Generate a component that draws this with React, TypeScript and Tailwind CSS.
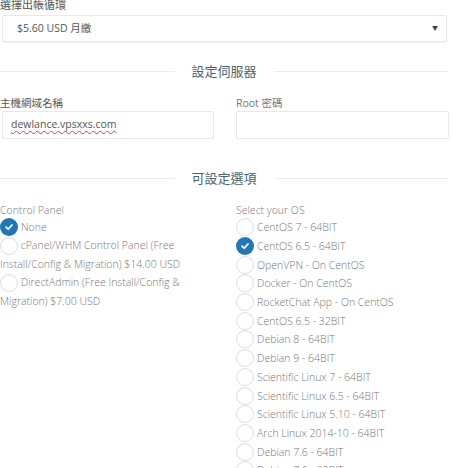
import React from "react";

const font = { fontFamily: '"Open Sans", "Noto Sans CJK TC", sans-serif' };

function Radio({ checked }: { checked?: boolean }) {
  if (checked) {
    return (
      <span className="inline-flex w-[18px] h-[18px] rounded-full bg-[#1f77b8] items-center justify-center align-middle shrink-0">
        <svg width="10" height="10" viewBox="0 0 10 10">
          <path d="M2 5.2 L4.2 7.2 L8 3" fill="none" stroke="white" strokeWidth="1.8" strokeLinecap="round" strokeLinejoin="round" />
        </svg>
      </span>
    );
  }
  return <span className="inline-block w-[18px] h-[18px] rounded-full border border-[#e0e0e0] bg-white shadow-[inset_0_1px_1px_rgba(0,0,0,0.04)] align-middle shrink-0" />;
}

function Heading({ text }: { text: string }) {
  return (
    <div className="flex items-center">
      <div className="flex-1 h-px bg-[#ededed]" />
      <div className="px-[17px] text-[13px] text-[#46646f] leading-[16px]">{text}</div>
      <div className="flex-1 h-px bg-[#ededed] mr-[5px]" />
    </div>
  );
}

const osList = [
  "CentOS 7 - 64BIT",
  "CentOS 6.5 - 64BIT",
  "OpenVPN - On CentOS",
  "Docker - On CentOS",
  "RocketChat App - On CentOS",
  "CentOS 6.5 - 32BIT",
  "Debian 8 - 64BIT",
  "Debian 9 - 64BIT",
  "Scientific Linux 7 - 64BIT",
  "Scientific Linux 6.5 - 64BIT",
  "Scientific Linux 5.10 - 64BIT",
  "Arch Linux 2014-10 - 64BIT",
  "Debian 7.6 - 64BIT",
  "Debian 7.6 - 32BIT",
];

export default function App() {
  return (
    <div className="w-[453px] h-[468px] overflow-hidden bg-white text-[#666]" style={font}>
      <div className="mt-[-3px] text-[11px] leading-[16px] text-[#555]">選擇出帳循環</div>
      <div className="mt-[2px] ml-[2px] mr-[6px] h-[27px] border border-[#e8e8e8] rounded-[2px] shadow-[0_1px_2px_rgba(0,0,0,0.05)] flex items-center justify-between pl-[14px] pr-[8px]">
        <span className="text-[10.5px] text-[#555]">$5.60 USD 月繳</span>
        <span className="text-[6px] text-[#444]">▼</span>
      </div>
      <div className="mt-[21px]">
        <Heading text="設定伺服器" />
      </div>
      <div className="mt-[17px] grid grid-cols-[214px_213px] gap-x-[22px]">
        <div>
          <div className="text-[10.5px] leading-[14px] text-[#555]">主機網域名稱</div>
          <div className="mt-[1px] ml-[2px] h-[28px] border border-[#e8e8e8] rounded-[2px] flex items-center pl-[8px]">
            <span className="text-[10.5px] text-[#555] underline decoration-wavy decoration-[#e53935] decoration-[1px] underline-offset-[2px]">dewlance.vpsxxs.com</span>
          </div>
        </div>
        <div>
          <div className="text-[10.5px] leading-[14px] text-[#777]">Root 密碼</div>
          <div className="mt-[1px] h-[28px] border border-[#e8e8e8] rounded-[2px]" />
        </div>
      </div>
      <div className="mt-[31px]">
        <Heading text="可設定選項" />
      </div>
      <div className="mt-[17px] grid grid-cols-[208px_217px] gap-x-[28px] text-[10.5px] font-light leading-[18px] text-[#777]">
        <div>
          <div className="leading-[15px]">Control Panel</div>
          <div className="flex items-center gap-[3px] h-[18px]"><Radio checked /><span>None</span></div>
          <div>
            <Radio /> <span>cPanel/WHM Control Panel (Free Install/Config &amp; Migration) $14.00 USD</span>
          </div>
          <div>
            <Radio /> <span>DirectAdmin (Free Install/Config &amp; Migration) $7.00 USD</span>
          </div>
        </div>
        <div>
          <div className="leading-[15px]">Select your OS</div>
          {osList.map((os, i) => (
            <div key={os} className="flex items-center gap-[3px] h-[18.7px]">
              <Radio checked={i === 1} />
              <span>{os}</span>
            </div>
          ))}
        </div>
      </div>
    </div>
  );
}
